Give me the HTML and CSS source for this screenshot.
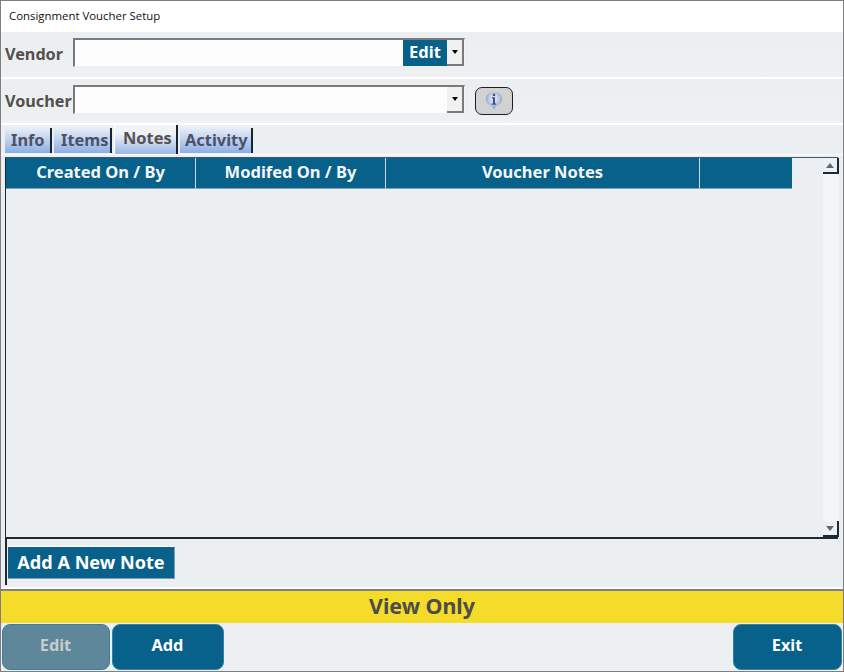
FILE: index.html
```html
<!DOCTYPE html>
<html lang="en">
<head>
<meta charset="utf-8">
<title>Consignment Voucher Setup</title>
<link rel="stylesheet" href="styles.css">
</head>
<body>
<div class="window">
  <div class="titlebar">Consignment Voucher Setup</div>
  <div class="row row-vendor">
    <label class="row-label">Vendor</label>
    <div class="combo">
      <div class="combo-text"></div>
      <div class="edit-chip">Edit</div>
      <div class="drop"><span class="arrow"></span></div>
    </div>
  </div>
  <div class="row row-voucher">
    <label class="row-label">Voucher</label>
    <div class="combo">
      <div class="combo-text"></div>
      <div class="drop"><span class="arrow"></span></div>
    </div>
    <button class="info-btn" aria-label="Info">
      <svg width="24" height="24" viewBox="0 0 24 24">
        <defs>
          <radialGradient id="bub" cx="50%" cy="40%" r="58%">
            <stop offset="0" stop-color="#e6ecf5"/>
            <stop offset="0.55" stop-color="#bccbe2"/>
            <stop offset="1" stop-color="#7f9ac6"/>
          </radialGradient>
        </defs>
        <path d="M12 3c5 0 8.200 3.100 8.200 7 0 3.700-2.800 5.900-5.800 6.900L12 20.500l-2.400-3.600C6.600 15.900 3.800 13.700 3.800 10c0-3.900 3.200-7 8.200-7z" fill="url(#bub)"/>
        <rect x="10.900" y="4.800" width="2.200" height="2.200" fill="#3f4f86"/>
        <path d="M10 8.300h3v6.200h1.200v1.200H9.800v-1.200H11V9.500h-1z" fill="#3f4f86"/>
      </svg>
    </button>
  </div>
  <div class="tabs">
    <div class="tab">Info</div>
    <div class="tab">Items</div>
    <div class="tab tab-active">Notes</div>
    <div class="tab">Activity</div>
  </div>
  <div class="panel">
    <div class="grid-box">
      <div class="grid-main">
        <div class="grid-head">
          <div class="col col-a">Created On / By</div>
          <div class="col col-a">Modifed On / By</div>
          <div class="col col-b">Voucher Notes</div>
          <div class="col col-c"></div>
        </div>
      </div>
      <div class="scrollbar">
        <div class="scroll-btn"><span class="tri tri-up"></span></div>
        <div class="scroll-btn"><span class="tri tri-down"></span></div>
      </div>
    </div>
    <div class="panel-foot">
      <button class="add-note">Add A New Note</button>
    </div>
  </div>
  <div class="status">View Only</div>
  <div class="actions">
    <button class="act act-edit" disabled>Edit</button>
    <button class="act act-add">Add</button>
    <button class="act act-exit">Exit</button>
  </div>
</div>
</body>
</html>
```
FILE: styles.css
```css
* { box-sizing: border-box; }
html, body { margin: 0; padding: 0; }
body { width: 844px; height: 672px; overflow: hidden; font-family: "Noto Sans", "Open Sans", sans-serif; }
button { font-family: inherit; cursor: default; }
.window { width: 844px; height: 672px; border: 1px solid #7f7f7f; display: flex; flex-direction: column; background: #fff; }
.titlebar { height: 31px; flex: none; padding: 7px 0 0 8px; font: 400 11.4px/15px "Open Sans", sans-serif; color: #101010; background: #fff; }
.row { flex: none; display: flex; align-items: flex-start; padding: 6px 0 0 4px; background: linear-gradient(#ebeff2, #eef0f1); }
.row-vendor { height: 45px; margin-bottom: 2px; }
.row-voucher { height: 44px; margin-bottom: 2px; }
.row-label { font-weight: 700; font-size: 16.2px; line-height: 32px; color: #54504c; width: 68px; white-space: nowrap; }
.combo { width: 392px; height: 29px; display: flex; background: #fdfdfd; border-top: 2px solid #7a7a7a; border-left: 2px solid #7a7a7a; border-right: 1px solid #f6f6f6; border-bottom: 1px solid #f0f0f0; }
.combo-text { flex: 1; }
.edit-chip { width: 44px; background: #08618a; color: #fff; font-weight: 700; font-size: 16.5px; line-height: 24px; text-align: center; }
.drop { width: 17px; background: #f1f1f1; border-right: 2px solid #7a7a7a; border-bottom: 2px solid #7a7a7a; display: flex; align-items: center; justify-content: center; }
.arrow { width: 0; height: 0; border-left: 3.5px solid transparent; border-right: 3.5px solid transparent; border-top: 4px solid #000; }
.info-btn { margin: 2px 0 0 10px; width: 38px; height: 28px; padding: 0; background: #d2d2d2; border: 1px solid #1e1e1e; border-radius: 7px; display: flex; align-items: center; justify-content: center; }
.tabs { flex: none; height: 29px; display: flex; align-items: flex-end; gap: 2px; padding: 0 0 1px 4px; background: #ebeff2; }
.tab { height: 25px; padding: 0 0 0 6px; font-weight: 700; font-size: 16.4px; line-height: 24px; color: #4f5066; background: linear-gradient(#e8eef8, #8fb2e6 95%); border-right: 2px solid #1a2230; white-space: nowrap; }
.tab:nth-child(1) { width: 47px; }
.tab:nth-child(2) { width: 58px; padding-left: 7px; }
.tab-active { width: 64px; height: 29px; margin-bottom: -1px; line-height: 26px; padding-left: 8px; color: #55524f; background: linear-gradient(#f1f3f6, #f0f2f6 30%, #9cbbe8 95%); border-left: 1px solid #fff; }
.tab:nth-child(4) { width: 73px; padding-left: 5px; }
.panel { flex: 1; display: flex; flex-direction: column; padding: 2px 5px 2px 4px; background: #ebeff2; border-top: 1px solid #fff; border-bottom: 2px solid #fff; }
.grid-box { height: 382px; flex: none; display: flex; border-left: 1px solid #1c2a38; border-bottom: 2px solid #1c2a38; border-top: 1px solid #3d5a70; background: #ebeff2; }
.grid-main { width: 817px; flex: none; }
.grid-head { height: 31px; display: flex; width: 786px; }
.col { background: #08618a; color: #f4f7f9; font-weight: 700; font-size: 16.5px; line-height: 28px; text-align: center; border-right: 1px solid #cfd9df; border-bottom: 1px solid #7f9fae; white-space: nowrap; }
.col-a { width: 190px; }
.col-b { width: 314px; }
.col-c { width: 92px; border-right: 0; }
.scrollbar { flex: 1; display: flex; flex-direction: column; justify-content: space-between; background: #f3f6f8; }
.scroll-btn { width: 16px; height: 16px; background: #eef1f4; border-right: 2px solid #1c2a38; border-bottom: 2px solid #1c2a38; display: flex; align-items: center; justify-content: center; }
.tri { width: 0; height: 0; border-left: 4px solid transparent; border-right: 4px solid transparent; }
.tri-up { border-bottom: 5px solid #666; }
.tri-down { border-top: 5px solid #666; }
.panel-foot { flex: 1; border-left: 2px solid #1c2a38; padding: 7px 0 0 1px; margin-right: 1px; }
.add-note { display: block; width: 167px; height: 33px; padding: 0 0 2px; background: #08618a; color: #fff; font-weight: 700; font-size: 18.100px; border: 0; border-top: 1px solid #fff; border-right: 1px solid #7f9fae; border-bottom: 1px solid #7f9fae; }
.status { flex: none; height: 34px; background: #f6dc2a; border-top: 2px solid #808080; text-align: center; font-weight: 700; font-size: 21.4px; line-height: 30px; color: #4c4c4c; }
.actions { flex: none; height: 48px; display: flex; align-items: flex-start; padding: 1px 1px 0 1px; gap: 2px; background: #ecf0f3; }
.act { height: 46px; border-radius: 8px; border: 1px solid #3a7fa0; color: #fff; background: #08618a; font-weight: 700; font-size: 16.3px; padding: 0 1px 5px 0; }
.act-edit { width: 108px; background: #5e8799; color: #c9ccce; }
.act-add { width: 112px; }
.act-exit { width: 109px; margin-left: auto; }
```
